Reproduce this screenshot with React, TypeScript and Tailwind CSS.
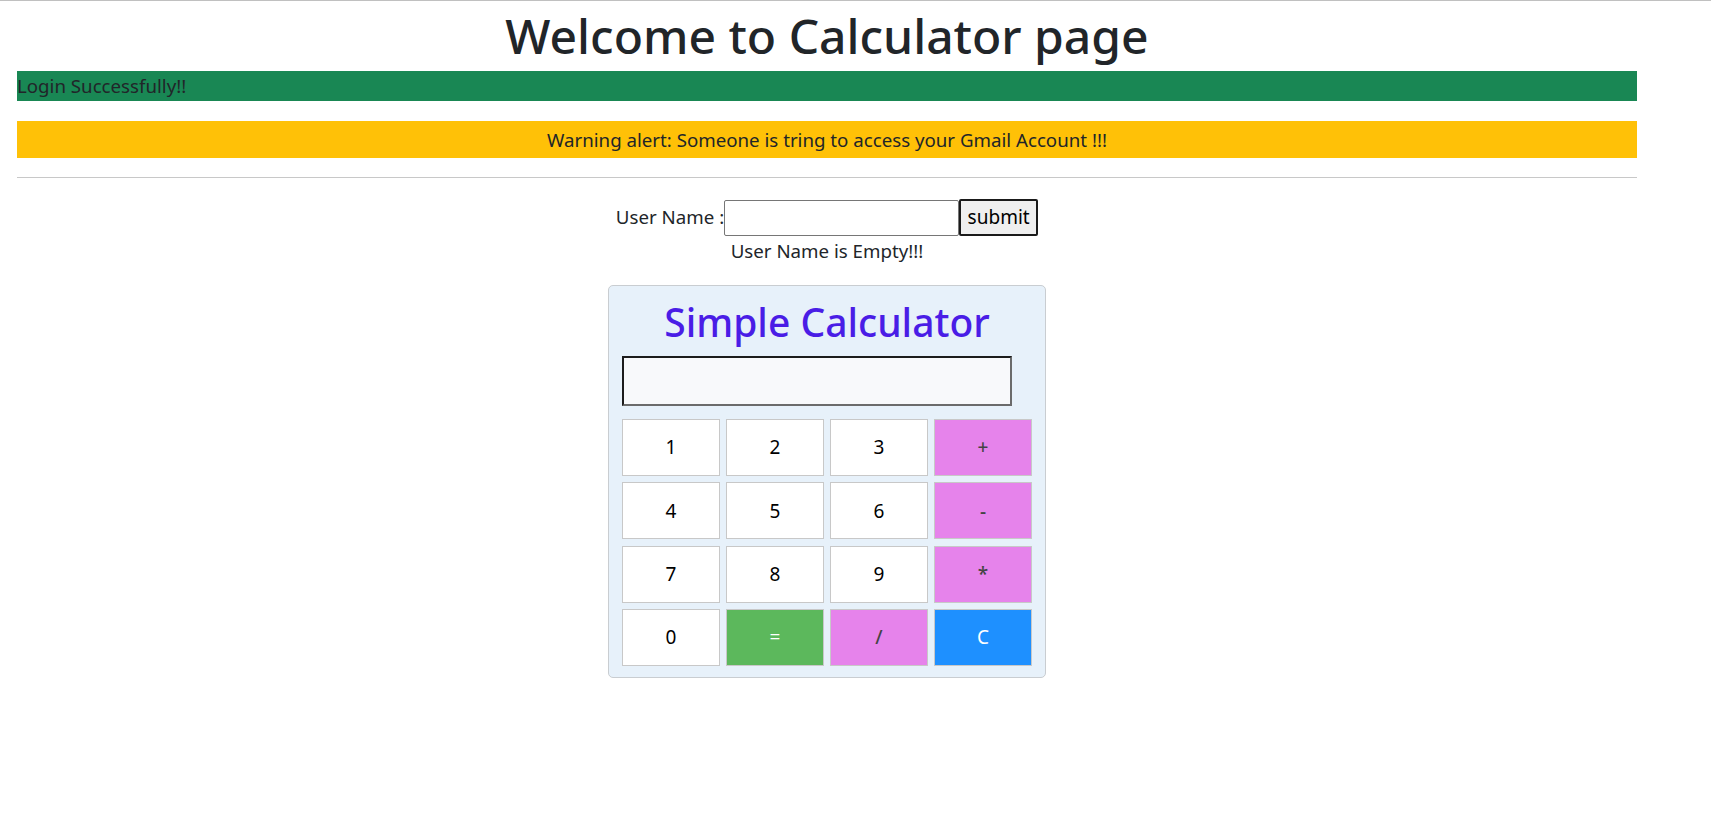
const keys: { label: string; kind: 'num' | 'op' | 'eq' | 'clear' }[] = [
  { label: '1', kind: 'num' },
  { label: '2', kind: 'num' },
  { label: '3', kind: 'num' },
  { label: '+', kind: 'op' },
  { label: '4', kind: 'num' },
  { label: '5', kind: 'num' },
  { label: '6', kind: 'num' },
  { label: '-', kind: 'op' },
  { label: '7', kind: 'num' },
  { label: '8', kind: 'num' },
  { label: '9', kind: 'num' },
  { label: '*', kind: 'op' },
  { label: '0', kind: 'num' },
  { label: '=', kind: 'eq' },
  { label: '/', kind: 'op' },
  { label: 'C', kind: 'clear' },
];

const keyStyles = {
  num: 'bg-white text-black',
  op: 'bg-[#e683eb] text-[#444] font-medium',
  eq: 'bg-[#5cb85c] text-white',
  clear: 'bg-[#1e90ff] text-white',
};

function Calculator() {
  return (
    <div className="mx-auto mt-[19px] w-[438px] rounded-[5px] border border-[#c9cdd1] bg-[#e7f1fa] px-[13px] pb-[11px] pt-[12px]">
      <h2 className="text-center text-[39px] font-medium leading-[48px] text-[#4a1de6]">
        Simple Calculator
      </h2>
      <input
        type="text"
        className="mt-[10px] block h-[50px] w-[390px] border-2 border-t-[#1c1c1c] border-l-[#1c1c1c] border-b-[#6b6b6b] border-r-[#6b6b6b] bg-[#f8f9fb]"
      />
      <div className="mt-[13px] grid grid-cols-4 gap-x-[6px] gap-y-[6.33px]">
        {keys.map((k) => (
          <button
            key={k.label}
            className={`h-[57px] border border-[#c8c8c8] text-[19px] ${keyStyles[k.kind]}`}
          >
            {k.label}
          </button>
        ))}
      </div>
    </div>
  );
}

export default function App() {
  return (
    <div
      className="min-h-[823px] border-t border-[#c0c0c0] bg-white text-[18.7px] text-[#212529]"
      style={{ fontFamily: '"Noto Sans", "Open Sans", sans-serif' }}
    >
      <div className="ml-[17px] w-[1620px] pb-10">
        <h1 className="mt-[5px] text-center text-[48px] font-medium leading-[60px]">
          Welcome to Calculator page
        </h1>
        <div className="mt-[5px] h-[30px] bg-[#198754] leading-[30px]">
          Login Successfully!!
        </div>
        <div className="mt-[20px] h-[37px] bg-[#ffc107] text-center leading-[37px]">
          Warning alert: Someone is tring to access your Gmail Account !!!
        </div>
        <hr className="mt-[19px] border-t border-[#c8c8c8]" />
        <div className="mt-[21px] flex items-center justify-center">
          <label>User Name :</label>
          <input
            type="text"
            className="h-[36px] w-[235px] rounded-[2px] border border-[#767676] bg-white"
          />
          <button className="h-[37px] w-[79px] rounded-[2px] border-2 border-[#1a1a1a] bg-[#efefef] text-[19px] text-black">
            submit
          </button>
        </div>
        <p className="text-center leading-[30px]">User Name is Empty!!!</p>
        <Calculator />
      </div>
    </div>
  );
}
